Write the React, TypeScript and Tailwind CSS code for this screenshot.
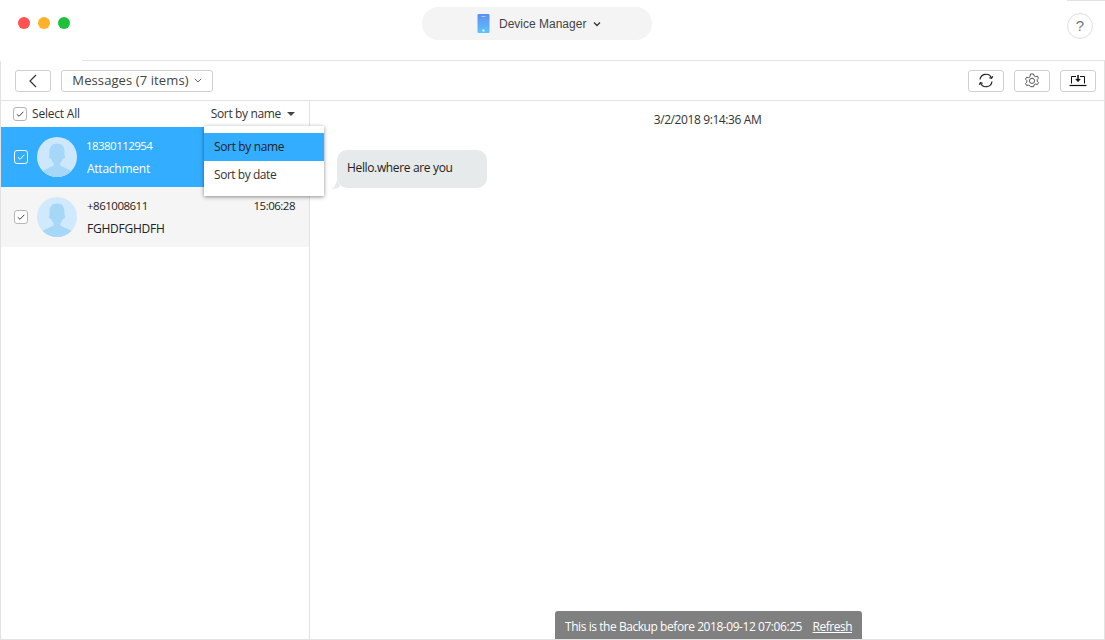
import React from "react";

const ui = { fontFamily: '"Open Sans", "Noto Sans", sans-serif' };

function Check({ light }: { light?: boolean }) {
  return (
    <span className={`flex h-[14px] w-[14px] shrink-0 items-center justify-center rounded-[3px] border ${light ? "border-white" : "border-[#b5b5b5] bg-white"}`}>
      <svg width="10" height="10" viewBox="0 0 10 10" fill="none">
        <path d="M1.8 5.2 4 7.3 8.3 2.8" stroke={light ? "#fff" : "#444"} strokeWidth="1" />
      </svg>
    </span>
  );
}

function Avatar({ dark }: { dark?: boolean }) {
  const id = dark ? "a1" : "a2";
  return (
    <svg width="40" height="40" viewBox="0 0 40 40" className="shrink-0">
      <circle cx="20" cy="20" r="20" fill={dark ? "#cde8fc" : "#d0e9fc"} />
      <clipPath id={id}><circle cx="20" cy="20" r="20" /></clipPath>
      <g clipPath={`url(#${id})`} fill="#a6d7f8">
        <path d="M20 6.500c-5 0-7.500 3.500-7.500 8 0 2 .2 4-.7 5.500 0 1.200 1.200 1.800 2.300 2 .7 1.800 1.600 3.200 2.600 4v2.500c-3 2-8 3-11.700 6V45h30V34.500c-3.700-3-8.700-4-11.700-6V26c1-.8 1.900-2.200 2.600-4 1.100-.2 2.300-.8 2.300-2-.9-1.500-.7-3.500-.7-5.500 0-4.500-2.500-8-7.500-8z" />
      </g>
    </svg>
  );
}

function ToolBtn({ children, className }: { children: React.ReactNode; className?: string }) {
  return (
    <div className={`flex h-[22px] items-center justify-center rounded-[3px] border border-[#cfcfcf] bg-white ${className ?? ""}`}>
      {children}
    </div>
  );
}

function Row({ name, sub, time, active }: { name: string; sub: string; time?: string; active?: boolean }) {
  return (
    <div className={`flex h-[60px] items-center pl-[13px] pr-[14px] ${active ? "bg-[#33adff] text-white" : "bg-[#f5f5f5] text-[#222]"}`}>
      <Check light={active} />
      <div className="ml-[9px]"><Avatar dark={active} /></div>
      <div className="ml-[10px] flex-1">
        <div className="flex h-[18px] items-center justify-between text-[11.5px] leading-[18px] tracking-[-0.5px]">
          <span className={active ? "-ml-px tracking-[-0.55px]" : ""}>{name}</span>
          {time && <span>{time}</span>}
        </div>
        <div className="mt-[5px] h-[18px] text-[12px] leading-[18px] tracking-[-0.25px]">{sub}</div>
      </div>
    </div>
  );
}

export default function App() {
  return (
    <div className="relative flex h-[640px] w-[1105px] flex-col overflow-hidden bg-white text-[#333]" style={ui}>
      <header className="relative flex h-[61px] shrink-0 items-start justify-between">
        <div className="mt-[17px] ml-[18px] flex gap-[8px]">
          <span className="h-[12px] w-[12px] rounded-full bg-[#ff5350]" />
          <span className="h-[12px] w-[12px] rounded-full bg-[#ffb227]" />
          <span className="h-[12px] w-[12px] rounded-full bg-[#1fc13c]" />
        </div>
        <div className="absolute top-[7px] left-[422px] flex h-[33px] w-[230px] items-center rounded-[16px] bg-[#f4f4f4] pl-[55px]">
          <svg width="13" height="19" viewBox="0 0 13 19" className="shrink-0">
            <defs>
              <linearGradient id="ph" x1="0" y1="0" x2="0" y2="1">
                <stop offset="0" stopColor="#5c8ef5" />
                <stop offset="1" stopColor="#5ec3fb" />
              </linearGradient>
            </defs>
            <rect x="0.500" y="0" width="12" height="19" rx="1" fill="url(#ph)" />
            <rect x="4.500" y="2" width="4" height="1" fill="#a9d0fa" />
            <rect x="5.500" y="15.500" width="2" height="2" fill="#e6f5ff" />
          </svg>
          <span className="ml-[9px] text-[12px] text-[#444]" style={{ fontFamily: '"Liberation Sans", sans-serif' }}>Device Manager</span>
          <svg width="8" height="6" viewBox="0 0 8 6" className="ml-[7px]" fill="none">
            <path d="M1 1.500 4 4.500 7 1.500" stroke="#333" strokeWidth="1.300" />
          </svg>
        </div>
        <div className="absolute top-0 left-[1067px] h-px w-[38px] bg-[#e3e3e3]" />
        <div className="absolute top-[13px] right-[12px] flex h-[26px] w-[26px] items-center justify-center rounded-full border border-[#dedede] text-[15px] text-[#777]" style={{ fontFamily: '"Liberation Sans", sans-serif' }}>?</div>
        <div className="absolute right-0 bottom-0 left-[82px] h-px bg-[#e2e2e2]" />
      </header>

      <div className="flex min-h-0 flex-1 flex-col border-x border-b border-[#e2e2e2]">
        <div className="flex h-[40px] shrink-0 items-center justify-between border-b border-[#e2e2e2] pr-[8px] pl-[14px]">
          <div className="flex items-center gap-[10px]">
            <ToolBtn className="w-[36px]">
              <svg width="10" height="14" viewBox="0 0 10 14" fill="none"><path d="M8 1 2 7l6 6" stroke="#333" strokeWidth="1.200" /></svg>
            </ToolBtn>
            <ToolBtn className="w-[152px]">
              <span className="pt-px text-[13px] tracking-[0.1px] text-[#444]">Messages (7 items)</span>
              <svg width="8" height="5" viewBox="0 0 8 5" className="ml-[5px]" fill="none"><path d="M.8.8 4 4 7.200.8" stroke="#666" /></svg>
            </ToolBtn>
          </div>
          <div className="flex items-center gap-[10px]">
            <ToolBtn className="w-[36px]">
              <svg width="16" height="15" viewBox="0 0 16 15" fill="none" stroke="#222" strokeWidth="1.200">
                <path d="M2 6.500A6 6 0 0 1 13.500 5" />
                <path d="M14 8.500A6 6 0 0 1 2.500 10" />
                <path d="M14.800 3.200 13.600 5.400 11.300 4.700" />
                <path d="M1.200 11.800 2.400 9.600 4.700 10.300" />
              </svg>
            </ToolBtn>
            <ToolBtn className="w-[36px]">
              <svg width="14" height="15" viewBox="0 0 14 15" fill="none" stroke="#444" strokeWidth="0.900">
                <path d="M5.500 1h3l.5 1.800 1.600.9 1.800-.5 1.100 2-1.300 1.300v1.700l1.300 1.300-1.100 2-1.800-.5-1.600.9-.5 1.800h-3L5 12.900l-1.600-.9-1.800.5-1.100-2 1.300-1.300V7.500L.5 6.200l1.100-2 1.800.5L5 3.800z" />
                <circle cx="7" cy="7.800" r="2.600" />
              </svg>
            </ToolBtn>
            <ToolBtn className="w-[36px]">
              <svg width="18" height="13" viewBox="0 0 18 13" fill="none" stroke="#111">
                <path d="M2.500 9.500V2.500H7M11 2.500h4.500v7" strokeWidth="1" />
                <path d="M.500 11.500h17" strokeWidth="1.200" />
                <path d="M9 1v5" strokeWidth="1.500" />
                <path d="M6.500 5 9 8l2.500-3z" fill="#111" strokeWidth="0.300" />
              </svg>
            </ToolBtn>
          </div>
        </div>

        <div className="flex min-h-0 flex-1">
          <aside className="w-[309px] shrink-0 border-r border-[#e2e2e2]">
            <div className="flex h-[26px] items-center justify-between pr-[14px] pl-[12px] text-[12px] text-[#333]">
              <div className="flex items-center gap-[5px]">
                <Check />
                <span className="tracking-[-0.2px]">Select All</span>
              </div>
              <div className="flex items-center gap-[6px]">
                <span className="tracking-[-0.35px]">Sort by name</span>
                <svg width="8" height="4" viewBox="0 0 8 4"><path d="M0 0h8L4 4z" fill="#444" /></svg>
              </div>
            </div>
            <Row name="18380112954" sub="Attachment" active />
            <Row name="+861008611" sub="FGHDFGHDFH" time="15:06:28" />
          </aside>

          <main className="relative flex-1">
            <div className="ml-[1px] pt-[10px] text-center text-[12px] leading-[18px] tracking-[-0.4px] text-[#333]">3/2/2018 9:14:36 AM</div>
            <div className="relative mt-[21px] ml-[27px] w-[150px] rounded-[10px] bg-[#e7eaea] px-[10px] pt-[8px] pb-[10px] text-[12px] leading-[20px] tracking-[-0.35px] text-[#222]">
              Hello.where are you
              <svg width="9" height="9" viewBox="0 0 9 9" className="absolute bottom-[-1px] left-[-6px]">
                <path d="M0 8.500C3 8 5 5 6 0l3 6.500C6 8.500 3 9 0 8.500z" fill="#e7eaea" />
              </svg>
            </div>
          </main>
        </div>
      </div>

      <div className="absolute top-[126px] left-[204px] w-[120px] bg-white py-[7px] text-[12px] text-[#333] shadow-[0_1px_4px_rgba(0,0,0,0.45)]">
        <div className="flex h-[28px] items-center bg-[#33adff] pl-[10px] tracking-[-0.35px] text-[#222]">Sort by name</div>
        <div className="flex h-[28px] items-center pl-[10px] tracking-[-0.45px]">Sort by date</div>
      </div>

      <div className="absolute top-[611px] left-[555px] flex h-[28px] w-[307px] items-center justify-between rounded-t-[3px] bg-[#808080] px-[10px] pt-[4px] text-[12px] whitespace-nowrap text-white">
        <span className="tracking-[-0.44px]">This is the Backup before 2018-09-12 07:06:25</span>
        <span className="tracking-[-0.5px] underline">Refresh</span>
      </div>
    </div>
  );
}
